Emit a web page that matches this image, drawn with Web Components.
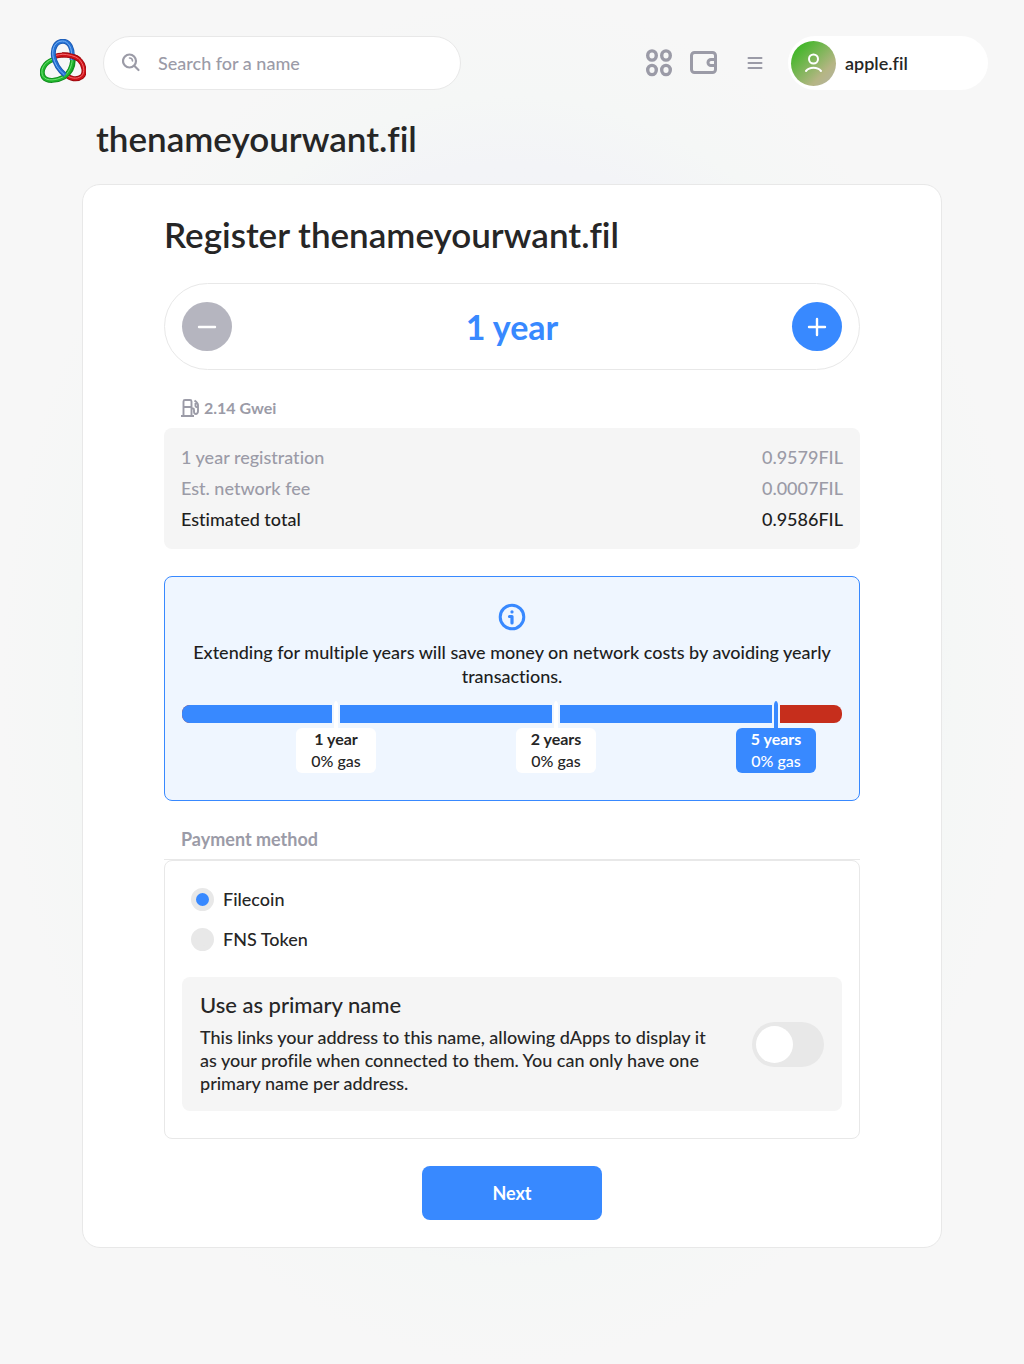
<!DOCTYPE html>
<html lang="en">
<head>
<meta charset="utf-8">
<meta name="viewport" content="width=device-width, initial-scale=1">
<title>Register thenameyourwant.fil</title>
<style>
  :root {
    --blue: #3889ff;
    --blue-soft: #eff6ff;
    --red: #c62e1c;
    --ink: #262626;
    --grey: #9b9ba7;
    --line: #e8e8e8;
    --panel: #f5f5f5;
  }
  html { min-height: 100%; }
  body {
    margin: 0;
    min-height: 100vh;
    font: 500 18px/24px Lato, Inter, sans-serif;
    font-variant-ligatures: none;
    color: var(--ink);
    background: radial-gradient(50% 50% at 50% 50%, #f0f3f8 0%, #f3f4f7 76%, #f5f7f6 86%, #f7f7f7 100%) #f7f7f7;
  }
</style>
</head>
<body>
<name-page></name-page>

<script>
const base = `<style>
  *, *::before, *::after { box-sizing: border-box; }
  :host { display: block; box-sizing: border-box; }
  button, input { font: inherit; color: inherit; margin: 0; }
  button { border: 0; padding: 0; background: none; cursor: pointer; }
  svg { display: block; }
  h1, h2, h3, p { margin: 0; font-weight: 500; }
</style>`;

function define(name, html, setup) {
  customElements.define(name, class extends HTMLElement {
    connectedCallback() {
      if (this.shadowRoot) return;
      this.attachShadow({ mode: 'open' }).innerHTML = base + html;
      if (setup) setup(this, this.shadowRoot);
    }
  });
}

define('brand-logo', `
<style>:host { flex: none; } a { display: block; }</style>
<a href="#" aria-label="Home">
<svg width="46" height="48" viewBox="0 0 46 48" fill="none">
  <defs>
    <path id="green" d="M33 18C34 27 30 34 24 38C17 42 7 43 3.500 38C0 32 4 24 13 20.500"/>
    <path id="red" d="M13 18C22 14.500 33 15.500 39 20.500C44.500 26 45.500 34 42 37.500C37 41.500 30 40 25.500 35.500"/>
    <path id="blue" d="M32 21C33.500 9 29 2.300 23 2.300C16 2.300 12.500 9 13.500 17C15 25 19 31 25 36"/>
    <path id="red-top" d="M22 15.800C29 16 35 17.500 39 20.500"/>
    <path id="green-end" d="M32.800 21C32 28 29.500 34 24 38"/>
  </defs>
  <use href="#green" stroke="#118a1e" stroke-width="5"/><use href="#green" stroke="#1fb52b" stroke-width="3.400"/>
  <use href="#green" stroke="#6fe075" stroke-width="1" transform="translate(-.4 -.5)"/>
  <use href="#red" stroke="#9a090e" stroke-width="5"/><use href="#red" stroke="#cf1219" stroke-width="3.400"/>
  <use href="#red" stroke="#f2686c" stroke-width="1" transform="translate(-.3 -.6)"/>
  <use href="#green-end" stroke="#118a1e" stroke-width="5"/><use href="#green-end" stroke="#1fb52b" stroke-width="3.400"/>
  <use href="#green-end" stroke="#6fe075" stroke-width="1" transform="translate(-.5 -.4)"/>
  <use href="#blue" stroke="#1b56ad" stroke-width="5"/><use href="#blue" stroke="#2672d4" stroke-width="3.400"/>
  <use href="#blue" stroke="#78b2f5" stroke-width="1" transform="translate(-.6 -.3)"/>
  <use href="#red-top" stroke="#9a090e" stroke-width="5"/><use href="#red-top" stroke="#cf1219" stroke-width="3.400"/>
  <use href="#red-top" stroke="#f2686c" stroke-width="1" transform="translate(-.3 -.6)"/>
</svg></a>`);

define('search-field', `
<style>
  :host { flex: 0 1 358px; }
  label { display: flex; align-items: center; gap: 16px; height: 54px; padding: 0 18px;
    background: #fff; border: 1px solid var(--line); border-radius: 27px; }
  svg { flex: none; color: var(--grey); }
  input { flex: 1; min-width: 0; border: 0; outline: 0; padding: 0; background: none; }
  input::placeholder { color: var(--grey); opacity: 1; }
</style>
<label>
  <svg width="20" height="20" viewBox="0 0 20 20" fill="none" stroke="currentColor" stroke-width="2.200" stroke-linecap="round">
    <circle cx="7.500" cy="8" r="6.500"/><path d="M12.500 13L16.500 17"/><path d="M7.500 5C9.500 5 10.500 6.200 10.500 8" stroke-width="1.600"/></svg>
  <input type="text" placeholder="Search for a name" aria-label="Search for a name">
</label>`);

define('main-nav', `
<style>
  nav { display: flex; align-items: center; color: var(--grey); gap: 16px; }
  a { color: inherit; display: block; }
  button { padding: 0 14px; color: inherit; }
</style>
<nav>
  <a href="#" aria-label="My names"><svg width="28" height="28" viewBox="0 0 28 28" fill="none" stroke="currentColor" stroke-width="3.400">
    <ellipse cx="7" cy="6.500" rx="4.300" ry="4.600"/><ellipse cx="21" cy="6.500" rx="4.300" ry="4.600"/><ellipse cx="7" cy="21" rx="4.300" ry="4.600"/><ellipse cx="21" cy="21" rx="4.300" ry="4.600"/></svg></a>
  <a href="#" aria-label="Wallet"><svg width="28" height="28" viewBox="0 0 28 28" fill="none" stroke="currentColor" stroke-width="3">
    <rect x="2.500" y="3.500" width="24" height="20" rx="3"/><path d="M26 10.500H22A3 3 0 0 0 22 16.500H26"/></svg></a>
  <button type="button" aria-label="Menu"><svg width="16" height="14" viewBox="0 0 16 14" fill="none" stroke="currentColor" stroke-width="2" stroke-linecap="round">
    <path d="M1.500 2H14.500M1.500 7H14.500M1.500 12H14.500"/></svg></button>
</nav>`);

define('profile-chip', `
<style>
  :host { flex: 0 1 200px; }
  button { display: flex; align-items: center; gap: 9px; width: 100%; height: 54px; padding: 0 3px;
    border-radius: 27px; background: #fff; font-weight: 600; color: var(--ink); }
  .avatar { flex: none; display: grid; place-items: center; width: 45px; height: 45px; border-radius: 50%;
    background: linear-gradient(135deg, #42b729 15%, #b5b584 72%, #b5b5a5 100%); }
</style>
<button type="button">
  <span class="avatar"><svg width="20" height="20" viewBox="0 0 20 20" fill="none" stroke="#fff" stroke-width="2" stroke-linecap="round">
    <circle cx="9.500" cy="6" r="4.500"/><path d="M2 18C5.500 13.800 13.500 13.800 17 18"/></svg></span>
  <slot></slot>
</button>`);

define('app-header', `
<style>
  header { display: flex; align-items: center; gap: 17px; padding: 36px 36px 0 40px; }
  .end { flex: 1; display: flex; align-items: center; justify-content: flex-end; gap: 11px; }
</style>
<header>
  <brand-logo></brand-logo>
  <search-field></search-field>
  <div class="end"><main-nav></main-nav><profile-chip>apple.fil</profile-chip></div>
</header>`);

define('year-stepper', `
<style>
  div { display: flex; align-items: center; justify-content: space-between; height: 87px; padding: 0 17px;
    border: 1px solid var(--line); border-radius: 44px; }
  button { display: grid; place-items: center; width: 50px; height: 49px; border-radius: 50%; background: var(--blue); }
  button:disabled { background: #b5b5bf; }
  output { font-size: 34px; line-height: 40px; font-weight: 700; color: var(--blue); }
</style>
<div>
  <button type="button" aria-label="Remove a year" disabled><svg width="20" height="20" viewBox="0 0 20 20" stroke="#fff" stroke-width="2.400" stroke-linecap="round"><path d="M2 10H18"/></svg></button>
  <output></output>
  <button type="button" aria-label="Add a year"><svg width="20" height="20" viewBox="0 0 20 20" stroke="#fff" stroke-width="2.400" stroke-linecap="round"><path d="M2 10H18M10 2V18"/></svg></button>
</div>`, (host, root) => {
  const [minus, plus] = root.querySelectorAll('button');
  let years = 1;
  const draw = () => {
    root.querySelector('output').textContent = years + (years === 1 ? ' year' : ' years');
    minus.disabled = years === 1;
  };
  minus.onclick = () => { years--; draw(); };
  plus.onclick = () => { years++; draw(); };
  draw();
});

define('fee-summary', `
<style>
  .gas { display: flex; align-items: center; gap: 4px; padding: 0 17px; margin-bottom: 9px; color: var(--grey);
    font-size: 16px; line-height: 22px; font-weight: 700; }
  .box { padding: 13px 17px 15px; border-radius: 8px; background: var(--panel); }
  table { width: 100%; border-collapse: collapse; color: var(--grey); }
  th, td { padding: 0; height: 31px; font-weight: 500; text-align: left; }
  td { text-align: right; }
  .total { color: #1e1e1e; }
</style>
<div class="gas">
  <svg width="19" height="20" viewBox="0 0 19 20" fill="none" stroke="currentColor" stroke-width="1.900">
    <path d="M2.500 18V3.500Q2.500 2 4 2H9Q10.500 2 10.500 3.500V18M0 18H13M2.500 9H10.500M10.500 10.500H12Q13 10.500 13 12V14Q13.200 16 15 16Q17 15.500 17 13V7Q17 5 13.500 2.500M14.500 5V8Q14.500 9 17 9.500"/></svg>
  <span>2.14 Gwei</span>
</div>
<div class="box"><table>
  <tr><th scope="row">1 year registration</th><td>0.9579FIL</td></tr>
  <tr><th scope="row">Est. network fee</th><td>0.0007FIL</td></tr>
  <tr class="total"><th scope="row">Estimated total</th><td>0.9586FIL</td></tr>
</table></div>`);

define('year-mark', `
<style>
  :host { display: flex; flex-direction: column; align-items: center; width: 80px; --fill: #fff; }
  :host([selected]) { --fill: var(--blue); color: #fff; }
  i { width: 8px; height: 27px; border: solid var(--blue-soft); border-width: 0 2px; border-radius: 4px 4px 0 0; background: var(--fill); background-clip: padding-box; }
  div { width: 100%; height: 45px; border-radius: 6px; background: var(--fill); text-align: center; font-size: 16px; line-height: 22px; }
  b { display: block; font-weight: 700; }
</style>
<i></i><div><b><slot></slot></b>0% gas</div>`);

define('gas-savings', `
<style>
  :host { padding: 26px 17px 27px; border: 1px solid var(--blue); border-radius: 8px; background: var(--blue-soft); }
  svg { margin: 0 auto 9px; }
  p { text-align: center; color: #1e1e1e; }
  .scale { display: grid; margin-top: 13px; }
  .bar, .marks { grid-area: 1 / 1; }
  .bar { display: flex; height: 18px; margin-top: 4px; border-radius: 8px; overflow: hidden; background: var(--red); }
  .bar span { width: 90%; background: var(--blue); }
  .marks { display: flex; justify-content: space-between; padding: 0 26px 0 114px; }
</style>
<svg width="28" height="28" viewBox="0 0 28 28" fill="none" stroke="#3889ff" stroke-width="3" stroke-linecap="round">
  <circle cx="14" cy="14" r="11.800"/><path d="M11.500 13.500H14V20M14 9V8.800" stroke-width="3.200" stroke-linejoin="round"/></svg>
<p>Extending for multiple years will save money on network costs by avoiding yearly transactions.</p>
<div class="scale">
  <div class="bar"><span></span></div>
  <div class="marks"><year-mark>1 year</year-mark><year-mark>2 years</year-mark><year-mark selected>5 years</year-mark></div>
</div>`);

define('toggle-row', `
<style>
  label { display: flex; align-items: center; justify-content: space-between; gap: 18px; padding: 16px 18px; border-radius: 8px; background: var(--panel); }
  strong { display: block; margin-bottom: 9px; font-size: 22px; line-height: 24px; font-weight: 500; }
  .text { flex: 0 1 524px; line-height: 23px; }
  input { appearance: none; flex: none; display: flex; align-items: center; width: 72px; height: 45px; padding: 0 4px; border-radius: 23px; background: #e8e8e8; }
  input::before { content: ""; width: 37px; height: 37px; border-radius: 50%; background: #fff; }
  input:checked { background: var(--blue); justify-content: flex-end; }
</style>
<label>
  <span class="text"><strong>Use as primary name</strong>This links your address to this name, allowing dApps to display it as your profile when connected to them. You can only have one primary name per address.</span>
  <input type="checkbox">
</label>`);

define('payment-method', `
<style>
  fieldset { margin: 0; padding: 0; border: 0; min-width: 0; }
  legend { width: 100%; padding: 0 17px 9px; border-bottom: 1px solid var(--line); color: var(--grey); line-height: 22px; font-weight: 700; }
  .box { padding: 18px 17px 27px; border: 1px solid var(--line); border-radius: 8px; }
  .option { display: flex; align-items: center; gap: 9px; height: 40px; padding: 0 9px; }
  .option input { appearance: none; flex: none; width: 23px; height: 23px; border: 5px solid #e8e8e8; border-radius: 50%; background: #e8e8e8; }
  .option input:checked { background: var(--blue); }
  toggle-row { margin-top: 18px; }
</style>
<fieldset>
  <legend>Payment method</legend>
  <div class="box">
    <label class="option"><input type="radio" name="pay" checked>Filecoin</label>
    <label class="option"><input type="radio" name="pay">FNS Token</label>
    <toggle-row></toggle-row>
  </div>
</fieldset>`);

define('action-button', `
<style>
  button { display: block; width: 180px; height: 54px; margin: 0 auto; border-radius: 8px; background: var(--blue); color: #fff; font-weight: 700; }
</style>
<button type="button"><slot></slot></button>`);

define('register-card', `
<style>
  :host { padding: 29px 81px 27px; background: #fff; border: 1px solid var(--line); border-radius: 18px; }
  section { display: flex; flex-direction: column; gap: 27px; }
  h2 { margin-bottom: 2px; font-size: 35px; line-height: 40px; font-weight: 600; }
</style>
<section>
  <h2><slot></slot></h2>
  <year-stepper></year-stepper>
  <fee-summary></fee-summary>
  <gas-savings></gas-savings>
  <payment-method></payment-method>
  <action-button>Next</action-button>
</section>`);

define('name-page', `
<style>
  main { max-width: 860px; margin: 0 auto; padding: 28px 0 116px; }
  h1 { margin: 0 14px 26px; font-size: 35px; line-height: 40px; font-weight: 600; }
</style>
<app-header></app-header>
<main>
  <h1>thenameyourwant.fil</h1>
  <register-card>Register thenameyourwant.fil</register-card>
</main>`);
</script>
</body>
</html>
